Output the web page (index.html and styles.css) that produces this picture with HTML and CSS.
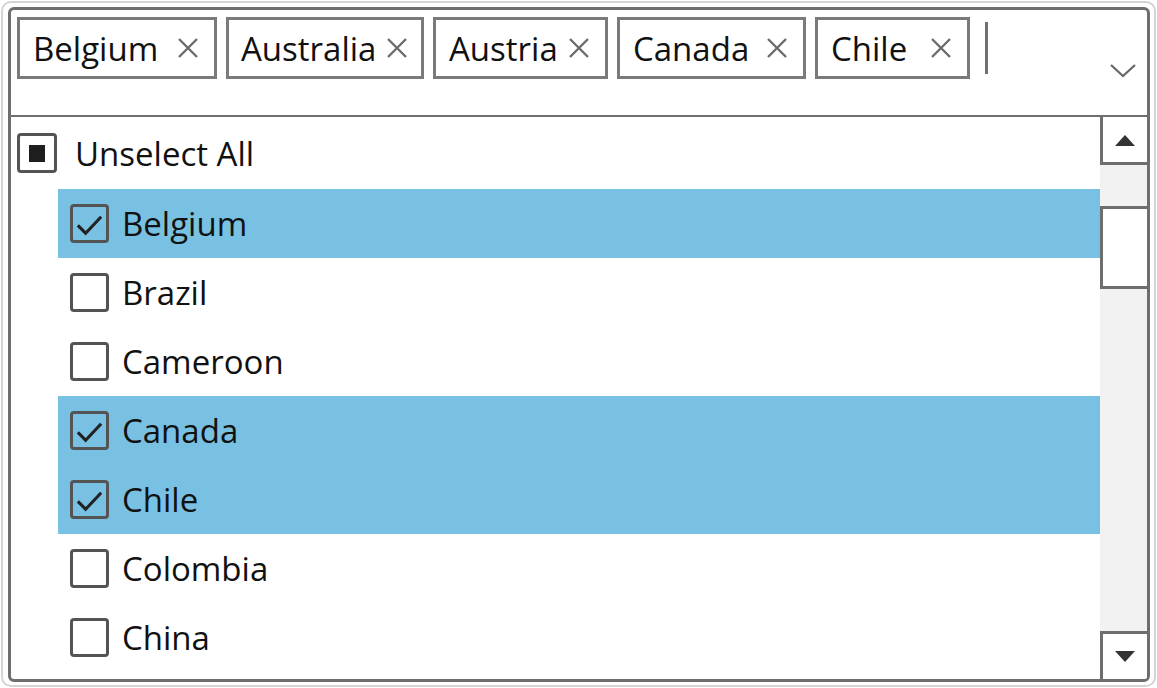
FILE: index.html
```html
<!DOCTYPE html>
<html lang="en">
<head>
    <meta charset="UTF-8">
    <title>Country Picker</title>
    <link rel="stylesheet" href="styles.css">
</head>
<body>
    <div class="frame">
        <div class="combo">
            <!-- Selected tags -->
            <div class="combo-head">
                <div class="tags">
                    <span class="tag tag-belgium">Belgium<svg class="tag-x" viewBox="0 0 22 22"><path d="M2 2 L20 20 M20 2 L2 20"/></svg></span>
                    <span class="tag tag-australia">Australia<svg class="tag-x" viewBox="0 0 22 22"><path d="M2 2 L20 20 M20 2 L2 20"/></svg></span>
                    <span class="tag tag-austria">Austria<svg class="tag-x" viewBox="0 0 22 22"><path d="M2 2 L20 20 M20 2 L2 20"/></svg></span>
                    <span class="tag tag-canada">Canada<svg class="tag-x" viewBox="0 0 22 22"><path d="M2 2 L20 20 M20 2 L2 20"/></svg></span>
                    <span class="tag tag-chile">Chile<svg class="tag-x" viewBox="0 0 22 22"><path d="M2 2 L20 20 M20 2 L2 20"/></svg></span>
                    <span class="caret"></span>
                </div>
                <svg class="chevron" viewBox="0 0 26 14"><path d="M1 1 L13 12 L25 1"/></svg>
            </div>

            <!-- Dropdown list -->
            <div class="combo-body">
                <ul class="options">
                    <li class="option option-all">
                        <span class="box"><span class="box-fill"></span></span>
                        Unselect All
                    </li>
                    <li class="option selected"><span class="box"><svg viewBox="0 0 34 34"><path d="M5 19 L13 27 L29 10"/></svg></span>Belgium</li>
                    <li class="option"><span class="box"></span>Brazil</li>
                    <li class="option"><span class="box"></span>Cameroon</li>
                    <li class="option selected"><span class="box"><svg viewBox="0 0 34 34"><path d="M5 19 L13 27 L29 10"/></svg></span>Canada</li>
                    <li class="option selected"><span class="box"><svg viewBox="0 0 34 34"><path d="M5 19 L13 27 L29 10"/></svg></span>Chile</li>
                    <li class="option"><span class="box"></span>Colombia</li>
                    <li class="option"><span class="box"></span>China</li>
                </ul>
                <div class="scrollbar">
                    <div class="scroll-btn scroll-up"><span class="tri-up"></span></div>
                    <div class="track-top"></div>
                    <div class="thumb"></div>
                    <div class="track-rest"></div>
                    <div class="scroll-btn scroll-down"><span class="tri-down"></span></div>
                </div>
            </div>
        </div>
    </div>
</body>
</html>
```

FILE: styles.css
```css
* {
    box-sizing: border-box;
}
html, body {
    margin: 0;
    height: 688px;
    background: #fff;
}
body {
    padding: 1px;
    font-family: 'Open Sans', sans-serif;
    font-size: 33px;
    color: #111;
    overflow: hidden;
}
.frame {
    height: 100%;
    border: 2px solid #d4d4d4;
    border-radius: 10px;
    padding: 4px 4px 3px 5px;
}
.combo {
    height: 100%;
    border: 3px solid #6e6e6e;
    border-radius: 6px;
    display: flex;
    flex-direction: column;
    overflow: hidden;
}

/* head with tags */
.combo-head {
    height: 107px;
    flex-shrink: 0;
    border-bottom: 2px solid #6e6e6e;
    display: flex;
    padding: 7px 11px 0 6px;
}
.tags {
    display: flex;
    gap: 9px;
    align-items: flex-start;
    flex: 1;
}
.tag {
    height: 62px;
    border: 3px solid #7a7a7a;
    display: flex;
    align-items: center;
    padding: 0 15px 0 13px;
    line-height: 1;
    white-space: nowrap;
}
.tag-belgium { width: 200px; }
.tag-australia { width: 198px; padding-left: 12px; padding-right: 13px; }
.tag-austria { width: 175px; }
.tag-canada { width: 189px; }
.tag-chile { width: 155px; }
.tag-x {
    width: 22px;
    height: 22px;
    margin-left: auto;
    flex-shrink: 0;
}
.tag-x path {
    stroke: #6b6b6b;
    stroke-width: 2.4;
    fill: none;
}
.caret {
    width: 3px;
    height: 52px;
    background: #707070;
    margin: 5px 0 0 6px;
}
.chevron {
    width: 26px;
    height: 14px;
    margin-top: 47px;
}
.chevron path {
    stroke: #666;
    stroke-width: 2.2;
    fill: none;
}

/* list */
.combo-body {
    flex: 1;
    display: flex;
    min-height: 0;
}
.options {
    list-style: none;
    margin: 0;
    padding: 3px 0 0 0;
    flex: 1;
    overflow: hidden;
}
.option {
    height: 69px;
    display: flex;
    align-items: center;
    margin-left: 47px;
    padding-left: 12px;
    gap: 13px;
    white-space: nowrap;
}
.option.selected {
    background: #79c1e2;
}
.option-all {
    margin-left: 0;
    padding-left: 6px;
    gap: 18px;
    padding-bottom: 3px;
}
.box {
    width: 39px;
    height: 39px;
    border: 3px solid #545454;
    border-radius: 4px;
    display: flex;
    align-items: center;
    justify-content: center;
    flex-shrink: 0;
}
.option-all .box {
    width: 40px;
    height: 40px;
    background: #fff;
}
.box-fill {
    width: 16px;
    height: 17px;
    background: #1e1e1e;
}
.box svg {
    width: 33px;
    height: 33px;
}
.box svg path {
    stroke: #222;
    stroke-width: 3.2;
    fill: none;
}

/* scrollbar */
.scrollbar {
    width: 47px;
    flex-shrink: 0;
    background: #f2f2f2;
    display: flex;
    flex-direction: column;
}
.scroll-btn {
    background: #fff;
    border-left: 3px solid #6e6e6e;
    display: flex;
    align-items: center;
    justify-content: center;
}
.scroll-up {
    height: 48px;
    border-bottom: 3px solid #6e6e6e;
}
.scroll-down {
    height: 48px;
    border-top: 3px solid #6e6e6e;
}
.track-top {
    height: 41px;
}
.thumb {
    height: 83px;
    background: #fff;
    border: 3px solid #6e6e6e;
    border-right: 0;
}
.track-rest {
    flex: 1;
}
.tri-up {
    width: 0;
    height: 0;
    border-left: 10px solid transparent;
    border-right: 10px solid transparent;
    border-bottom: 11px solid #333;
    margin-top: 1px;
}
.tri-down {
    width: 0;
    height: 0;
    border-left: 10px solid transparent;
    border-right: 10px solid transparent;
    border-top: 11px solid #333;
}
```
